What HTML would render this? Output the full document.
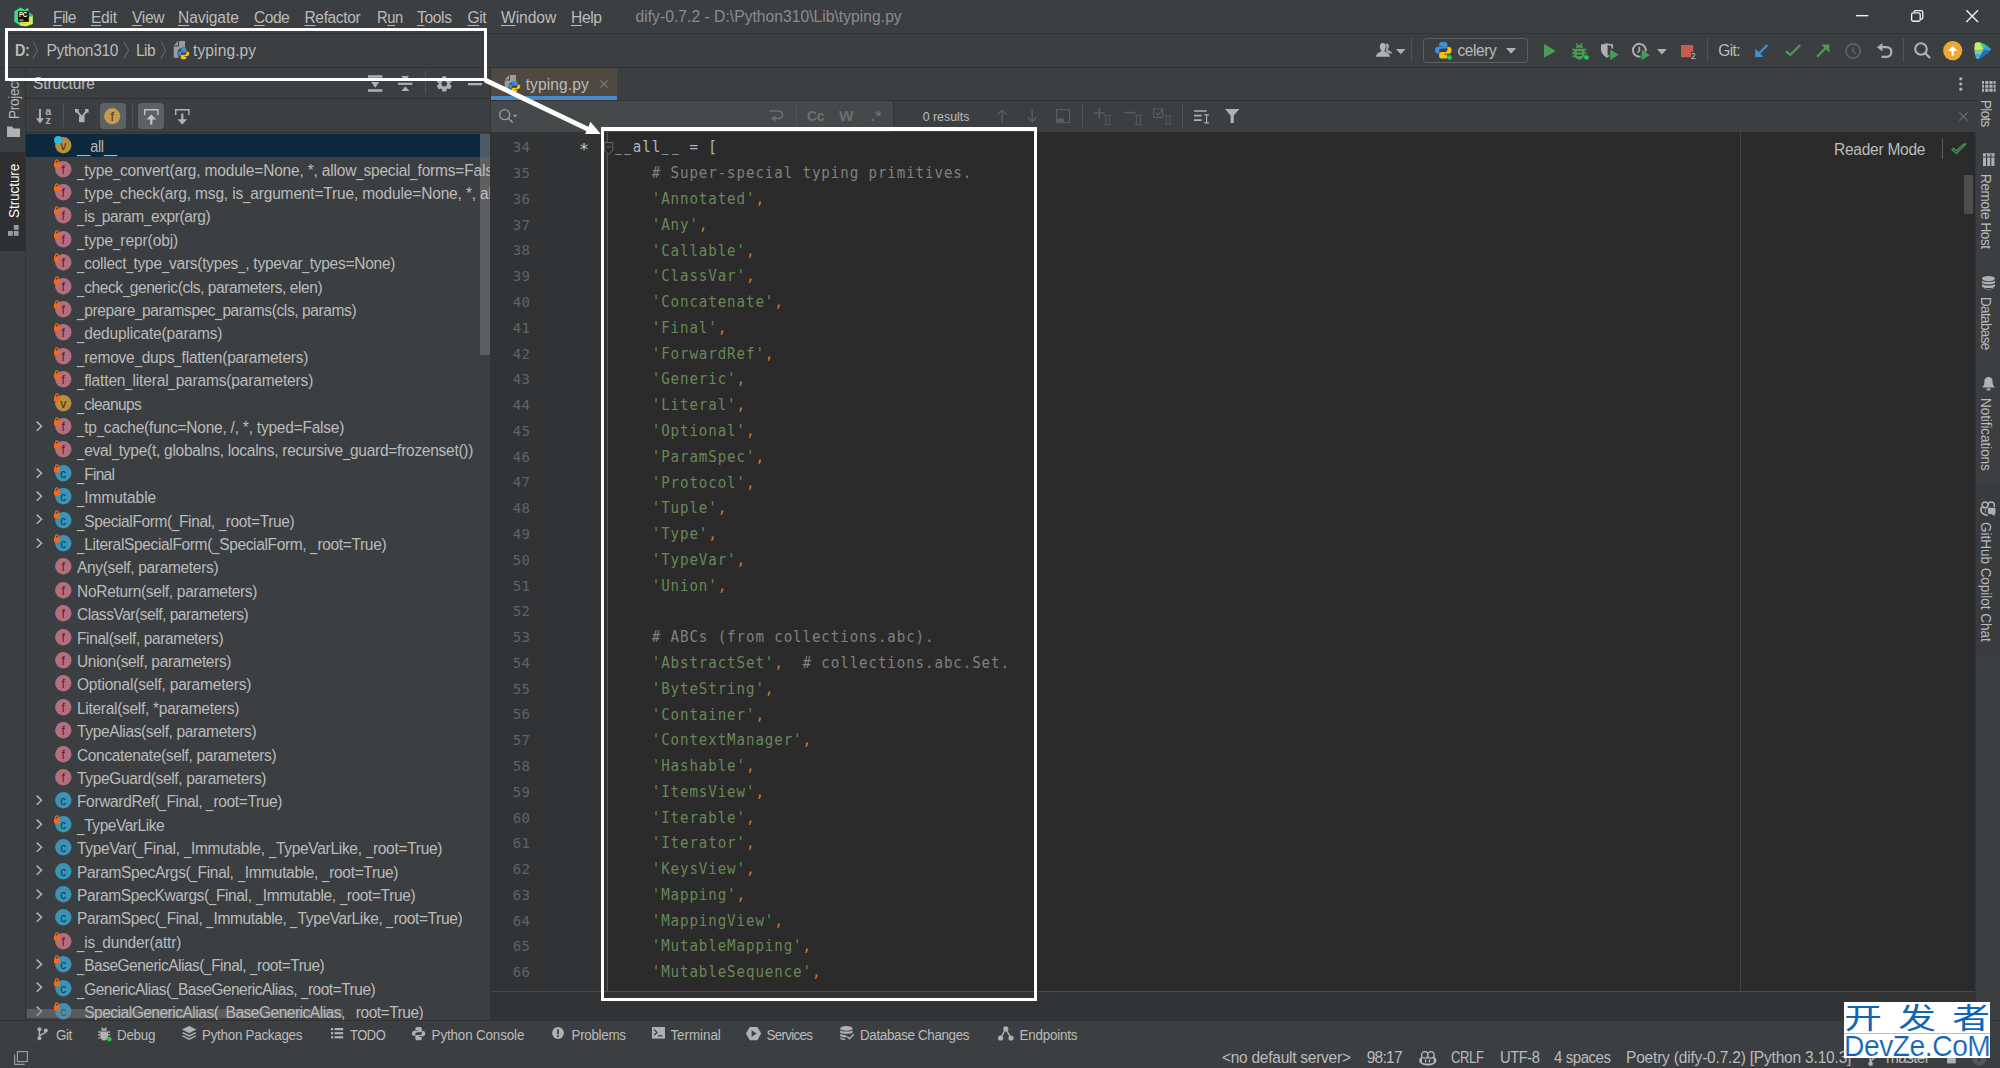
<!DOCTYPE html>
<html lang="en"><head><meta charset="utf-8"><title>typing.py</title>
<style>

html,body{margin:0;padding:0;}
body{width:2000px;height:1068px;overflow:hidden;background:#3c3f41;position:relative;
 font-family:"Liberation Sans","Noto Sans CJK SC",sans-serif;font-size:15.5px;color:#bbbbbb;}
.abs{position:absolute;}
.t{position:absolute;white-space:pre;line-height:20px;height:20px;transform-origin:0 15px;}
.u{display:inline-block;font-style:normal;width:7.2px;letter-spacing:0;transform:translateY(1.1px) scaleX(0.835);transform-origin:0 0;}
.hl{position:absolute;height:1px;background:#323232;}
.vl{position:absolute;width:1px;background:#323232;}
svg{position:absolute;overflow:visible;}
u{text-decoration:underline;text-underline-offset:2px;text-decoration-thickness:1px;}
/* tree */
#tree{position:absolute;left:26px;top:134px;width:464px;height:886px;overflow:hidden;}
.row{position:absolute;left:0;width:464px;height:23.4px;}
.row .t{left:51px;top:2px;}
.row.sel{background:#0d293e;}
/* editor */
#ed{position:absolute;left:490px;top:132px;width:1485px;height:860px;background:#2b2b2b;overflow:hidden;}
#gut{position:absolute;left:0;top:0;width:117px;height:860px;background:#313335;}
.ln{position:absolute;left:0;width:40.35px;text-align:right;color:#606366;font-family:"DejaVu Sans Mono","Liberation Mono",monospace;font-size:14px;letter-spacing:0.35px;line-height:20px;height:20px;}
.cl{position:absolute;left:124.1px;white-space:pre;font-family:"DejaVu Sans Mono","Liberation Mono",monospace;font-size:15.4px;letter-spacing:0.979px;transform:scaleX(0.92);transform-origin:0 0;line-height:20px;height:20px;color:#a9b7c6;}
.cu{display:inline-block;font-style:normal;transform:translateY(-1.3px) scaleX(.8);}
.s{color:#6a8759}.c{color:#808080}.k{color:#cc7832}
.vt{position:absolute;white-space:pre;line-height:16px;height:16px;font-size:13.5px;transform-origin:0 0;}

</style></head>
<body>
<div class="abs" id="menubar" style="left:0;top:0;width:2000px;height:33px;background:#3c3f41"></div>
<svg style="left:14px;top:7px" width="19.2" height="19.4" viewBox="0 0 19.2 19.4"><path d="M0.5 4 L6.5 0.4 L11 3 L14 0.6 L15 6 L19 8 L18.6 16.5 L12 19.2 L6 18.6 L0.2 14.5 Z" fill="#3ddc84"/><path d="M14.6 4.6 L19 8.2 L17.4 11 L14.6 10 Z" fill="#21a8e6"/><path d="M14.8 10 L18.6 9.2 L18.8 17 L12 19.3 L6.2 18.6 L6.6 15 Z" fill="#d8f24e"/><path d="M6 15.5 L15 15.5 L15.4 8 L16.4 15 L10 17 Z" fill="#f5a33a" opacity=".7"/><rect x="4" y="4.2" width="10.8" height="10.6" fill="#0a0c06"/><rect x="5.2" y="12.6" width="4.2" height="1" fill="#e8e8e8"/><text x="4.9" y="10" font-family="Liberation Sans,sans-serif" font-weight="bold" font-size="6.3" fill="#fff" letter-spacing="-0.3">PC</text></svg>
<span class="t" style="left:53px;top:8.4px;letter-spacing:-0.609px;font-size:15.6px;"><u>F</u>ile</span>
<span class="t" style="left:91px;top:8.4px;letter-spacing:-0.297px;font-size:15.6px;"><u>E</u>dit</span>
<span class="t" style="left:132px;top:8.4px;letter-spacing:-0.336px;font-size:15.6px;"><u>V</u>iew</span>
<span class="t" style="left:178px;top:8.4px;letter-spacing:-0.106px;font-size:15.6px;"><u>N</u>avigate</span>
<span class="t" style="left:254px;top:8.4px;letter-spacing:-0.527px;font-size:15.6px;"><u>C</u>ode</span>
<span class="t" style="left:304.5px;top:8.4px;letter-spacing:-0.405px;font-size:15.6px;"><u>R</u>efactor</span>
<span class="t" style="left:377px;top:8.4px;letter-spacing:-0.450px;transform:scale(0.9457,1);font-size:15.6px;">R<u>u</u>n</span>
<span class="t" style="left:417px;top:8.4px;letter-spacing:-0.346px;font-size:15.6px;"><u>T</u>ools</span>
<span class="t" style="left:467.5px;top:8.4px;letter-spacing:-0.411px;font-size:15.6px;"><u>G</u>it</span>
<span class="t" style="left:501px;top:8.4px;letter-spacing:-0.047px;font-size:15.6px;"><u>W</u>indow</span>
<span class="t" style="left:571px;top:8.4px;letter-spacing:-0.348px;font-size:15.6px;"><u>H</u>elp</span>
<span class="t" style="left:635.5px;top:6.6px;letter-spacing:0.047px;font-size:15.6px;color:#8b8d8e;">dify-0.7.2 - D:\Python310\Lib\typing.py</span>
<svg style="left:1856px;top:10px" width="13" height="13" viewBox="0 0 13 13"><path d="M0 5.7 H12.4" stroke="#f0f0f0" stroke-width="1.35" fill="none"/></svg>
<svg style="left:1911px;top:10px" width="13" height="13" viewBox="0 0 13 13"><rect x="0.6" y="2.8" width="8.6" height="8.4" rx="1.6" fill="none" stroke="#f0f0f0" stroke-width="1.35"/><path d="M3 2.6 V2.2 Q3 0.6 4.6 0.6 H10 Q11.8 0.6 11.8 2.4 V7.6 Q11.8 9.2 10.2 9.2 H9.6" fill="none" stroke="#f0f0f0" stroke-width="1.35"/></svg>
<svg style="left:1966px;top:10px" width="13" height="13" viewBox="0 0 13 13"><path d="M0.3 0.3 L12 12 M12 0.3 L0.3 12" stroke="#f0f0f0" stroke-width="1.4" fill="none"/></svg>
<div class="hl" style="left:0;top:33px;width:2000px;background:#323537"></div>
<span class="t" style="left:14.5px;top:40.7px;letter-spacing:-0.450px;transform:scale(0.9244,1.03);font-weight:bold;">D:</span>
<span class="t" style="left:46.5px;top:40.7px;letter-spacing:-0.269px;transform:scale(1,1.03);">Python310</span>
<span class="t" style="left:136px;top:40.7px;letter-spacing:-0.499px;transform:scale(1,1.03);">Lib</span>
<span class="t" style="left:193px;top:40.7px;letter-spacing:0.128px;transform:scale(1,1.03);">typing.py</span>
<svg style="left:32px;top:41px" width="7" height="18" viewBox="0 0 7 18"><path d="M1 0.5 L5.5 9 L1 17.5" fill="none" stroke="#6e7173" stroke-width="1"/></svg>
<svg style="left:123px;top:41px" width="7" height="18" viewBox="0 0 7 18"><path d="M1 0.5 L5.5 9 L1 17.5" fill="none" stroke="#6e7173" stroke-width="1"/></svg>
<svg style="left:160px;top:41px" width="7" height="18" viewBox="0 0 7 18"><path d="M1 0.5 L5.5 9 L1 17.5" fill="none" stroke="#6e7173" stroke-width="1"/></svg>
<svg style="left:173px;top:41px" width="13" height="17" viewBox="0 0 13 17"><path d="M0.7 16.8 V4.4 L5 0 V4.4 H0.7 Z M6 0 H12 V16.8 H0.7 V5.4 H6 Z" fill="#9a9da0"/><rect x="8.8" y="2.4" width="1.2" height="1.2" fill="#7d95a6"/><rect x="8.8" y="5.2" width="1.2" height="1.2" fill="#7d95a6"/><rect x="2" y="9" width="1.2" height="1.2" fill="#7d95a6"/><rect x="4.4" y="9" width="1.2" height="1.2" fill="#7d95a6"/></svg>
<svg style="left:177px;top:47.2px" width="12.6" height="12.6" viewBox="0 0 12 12"><circle cx="6" cy="6" r="5.6" fill="#3c3f41"/></svg>
<svg style="left:177.6px;top:47.8px" width="11.2" height="11.2" viewBox="0 0 12 12"><path d="M5.4 0 C3 0 3.1 1 3.1 1.6 V3 H5.6 V3.5 H2 C0.6 3.5 0 4.6 0 6 C0 7.4 0.7 8.3 1.9 8.3 H3 V6.6 C3 5.4 3.9 4.7 5 4.7 H7.6 C8.5 4.7 9 4 9 3.2 V1.6 C9 0.6 8 0 7 0 Z" fill="#3f8fd6"/><path d="M6.6 12 C9 12 8.9 11 8.9 10.4 V9 H6.4 V8.5 H10 C11.4 8.5 12 7.4 12 6 C12 4.6 11.3 3.7 10.1 3.7 H9 V5.4 C9 6.6 8.1 7.3 7 7.3 H4.4 C3.5 7.3 3 8 3 8.8 V10.4 C3 11.4 4 12 5 12 Z" fill="#f5c211"/></svg>
<svg style="left:1376px;top:43.4px" width="16.6" height="13.8" viewBox="0 0 16.6 13.8"><path d="M9.5 1.2 C10 0.2 12.6 0.2 13 2.4 C13.2 4 12.6 5.4 12 6 V7 C13.4 7.8 16 8.6 16.4 10.4 H12.5 C11.5 9.2 10 8.6 9.6 8 C10.6 6.4 10.8 3 9.5 1.2 Z" fill="#9fa1a3"/><path d="M6.8 0 C9.4 0 10 2 9.8 4 C9.7 5.4 9 6.6 8.6 7.2 V8.4 C10.4 9.2 13.4 10 14 13.8 H0 C0.4 10 3.4 9.2 5.2 8.4 V7.2 C4.6 6.6 4 5.4 3.9 4 C3.7 2 4.4 0 6.8 0 Z" fill="#afb1b3"/></svg>
<svg style="left:1396px;top:49px" width="9.6" height="5.2" viewBox="0 0 9.6 5.2"><path d="M0 0 H9.6 L4.8 5.2 Z" fill="#afb1b3"/></svg>
<div class="vl" style="left:1411px;top:38px;height:24px;background:#515456"></div>
<div class="abs" style="left:1423px;top:37.5px;width:103px;height:23.6px;border:1px solid #5e6162;border-radius:3.5px;box-sizing:content-box"></div>
<svg style="left:1434.8px;top:42px" width="16.6" height="16.6" viewBox="0 0 12 12"><path d="M5.4 0 C3 0 3.1 1 3.1 1.6 V3 H5.6 V3.5 H2 C0.6 3.5 0 4.6 0 6 C0 7.4 0.7 8.3 1.9 8.3 H3 V6.6 C3 5.4 3.9 4.7 5 4.7 H7.6 C8.5 4.7 9 4 9 3.2 V1.6 C9 0.6 8 0 7 0 Z" fill="#3f8fd6"/><path d="M6.6 12 C9 12 8.9 11 8.9 10.4 V9 H6.4 V8.5 H10 C11.4 8.5 12 7.4 12 6 C12 4.6 11.3 3.7 10.1 3.7 H9 V5.4 C9 6.6 8.1 7.3 7 7.3 H4.4 C3.5 7.3 3 8 3 8.8 V10.4 C3 11.4 4 12 5 12 Z" fill="#f5c211"/></svg>
<svg style="left:1447.4px;top:54.7px" width="5" height="5" viewBox="0 0 5 5"><circle cx="2.5" cy="2.5" r="2.4" fill="#1fd23c"/></svg>
<svg style="left:1505.6px;top:48.2px" width="10.2" height="5.8" viewBox="0 0 10.2 5.8"><path d="M0 0 H10.2 L5.1 5.8 Z" fill="#afb1b3"/></svg>
<svg style="left:1543.5px;top:43.8px" width="12" height="14" viewBox="0 0 12 14"><path d="M0 0 L11.8 6.9 L0 13.8 Z" fill="#499c54"/></svg>
<svg style="left:1571.5px;top:42.5px" width="15" height="17" viewBox="0 0 15 17"><path d="M4.4 0.4 L6.2 2.8 M10.2 0.4 L8.4 2.8" stroke="#499c54" stroke-width="1.5" fill="none"/><path d="M0.2 6.6 H2.4 M0 10 H2.4 M0.4 13.4 H2.6 M14.4 6.6 H12.2 M14.6 10 H12.2 M14.2 13.4 H12" stroke="#499c54" stroke-width="1.6" fill="none"/><path d="M7.3 2 C9.8 2 10.8 3.4 11 4.8 H3.6 C3.8 3.4 4.8 2 7.3 2 Z M2 5.8 H12.6 V10.6 C12.6 14.4 10 16.6 7.3 16.6 C4.6 16.6 2 14.4 2 10.6 Z" fill="#499c54"/><rect x="4.6" y="8.2" width="5.4" height="1.4" fill="#3c3f41"/><rect x="4.6" y="11.6" width="5.4" height="1.4" fill="#3c3f41"/></svg>
<svg style="left:1583.6px;top:54.8px" width="5" height="5" viewBox="0 0 5 5"><circle cx="2.5" cy="2.5" r="2.3" fill="#1fd23c"/></svg>
<svg style="left:1601px;top:43px" width="18" height="17.2" viewBox="0 0 18 17.2"><path d="M0 1.4 C2 1.4 4.6 0.9 6 0 V14.6 C3 13 0 10.4 0 5.8 Z" fill="#afb1b3"/><path d="M6 0.9 C7.4 1.6 9.6 2 11.2 2.1 V5.4" fill="none" stroke="#afb1b3" stroke-width="1.7"/><path d="M6 1 V14 C7 13.6 7.6 13.2 8.4 12.6" fill="none" stroke="#afb1b3" stroke-width="1.2"/><path d="M9.2 6.6 L17.8 11.8 L9.2 17 Z" fill="#499c54"/></svg>
<svg style="left:1631.5px;top:43px" width="18" height="17.2" viewBox="0 0 18 17.2"><path d="M8.6 13.5 A6.4 6.4 0 1 1 13.6 8.6" fill="none" stroke="#afb1b3" stroke-width="1.9"/><path d="M7.4 3.8 V7.4 L5.6 9.8" fill="none" stroke="#afb1b3" stroke-width="1.6"/><path d="M9.6 6.8 L17.8 12 L9.6 17.2 Z" fill="#499c54"/></svg>
<svg style="left:1656.8px;top:48.6px" width="9.8" height="5.6" viewBox="0 0 9.8 5.6"><path d="M0 0 H9.8 L4.9 5.6 Z" fill="#afb1b3"/></svg>
<svg style="left:1681.4px;top:44.6px" width="12.4" height="12.4" viewBox="0 0 12.4 12.4"><rect x="0" y="0" width="12.2" height="12.2" fill="#c85a4e"/></svg>
<span class="t" style="left:1690.6px;top:49px;font-size:8.5px;color:#c5c8ca;background:#3c3f41;line-height:8px;height:8px;top:52px;padding:0 0.3px">2</span>
<div class="vl" style="left:1707px;top:38px;height:24px;background:#515456"></div>
<svg style="left:1755.4px;top:44px" width="13.6" height="13.2" viewBox="0 0 13.6 13.2"><path d="M12.4 1 L3 10.6" stroke="#3e93d6" stroke-width="2.2" fill="none"/><path d="M0.2 13 V4.6 L8.4 13 Z" fill="#3e93d6"/></svg>
<svg style="left:1785px;top:44px" width="16.2" height="12.8" viewBox="0 0 16.2 12.8"><path d="M1 7.2 L5.2 11 L15.2 1" stroke="#499c54" stroke-width="2.3" fill="none"/></svg>
<svg style="left:1815.6px;top:44.2px" width="13.8" height="13.6" viewBox="0 0 13.8 13.6"><path d="M1 12.8 L10.4 3.4" stroke="#499c54" stroke-width="2.2" fill="none"/><path d="M13.4 0.4 V8.8 L5.2 0.4 Z" fill="#499c54"/></svg>
<svg style="left:1845px;top:43px" width="16.4" height="16.4" viewBox="0 0 16.4 16.4"><circle cx="8.1" cy="8.1" r="7.1" fill="none" stroke="#5b5e60" stroke-width="2"/><path d="M8 4.2 V8.6 L10.8 10.6" fill="none" stroke="#5b5e60" stroke-width="1.7"/></svg>
<svg style="left:1876.6px;top:43px" width="15.4" height="15" viewBox="0 0 15.4 15"><path d="M5.4 0 V8.4 L0 4.2 Z" fill="#afb1b3"/><path d="M5 4.2 H9.6 C12.6 4.2 14.4 6.4 14.4 9 C14.4 11.8 12.4 13.8 9.6 13.8 H4.6" fill="none" stroke="#afb1b3" stroke-width="2.2"/></svg>
<div class="vl" style="left:1903px;top:38px;height:24px;background:#515456"></div>
<svg style="left:1913.6px;top:42.4px" width="17" height="17" viewBox="0 0 17 17"><circle cx="7" cy="7" r="5.8" fill="none" stroke="#afb1b3" stroke-width="2.1"/><path d="M11 11 L16 16" stroke="#afb1b3" stroke-width="2.4"/></svg>
<svg style="left:1942.8px;top:41px" width="19.2" height="19.2" viewBox="0 0 19.2 19.2"><circle cx="9.7" cy="9.6" r="9.6" fill="#f0a732"/><path d="M9.7 4.8 L14.3 9.9 H10.8 V14.8 H8.6 V9.9 H5.1 Z" fill="#fff"/></svg>
<svg style="left:1974.4px;top:42px" width="17.4" height="17.4" viewBox="0 0 17.4 17.4"><defs><clipPath id="tbx"><path d="M1 1.2 C2.4 -0.2 5.4 0 8 1 C11.6 2.4 15 4.8 17 7.4 C15 10.6 10 14.6 5.2 16.8 C3.8 17.4 2.6 17.2 2.2 16 C0.2 11 0 5.2 1 1.2 Z"/></clipPath></defs><g clip-path="url(#tbx)"><rect x="0" y="0" width="17.4" height="17.4" fill="#1b74c9"/><path d="M0 0 H6.4 L9.6 7.4 L0 8.6 Z" fill="#c6ee5c"/><path d="M6 -1 H10 L13.4 2.6 L9.6 7.4 Z" fill="#37d27c"/><path d="M10 -1 L18 4 V8.6 L9.6 7.4 L13.4 2.6 Z" fill="#2fa8dc"/><path d="M0 8.6 L9.6 7.4 L6.4 13 L0 11.8 Z" fill="#8fc79a"/><path d="M0 11.8 L6.4 13 L4.4 18 H0 Z" fill="#38b6d9"/></g></svg>
<span class="t" style="left:1457.5px;top:41.2px;letter-spacing:-0.443px;transform:scale(1,1.03);font-size:15.5px;">celery</span>
<span class="t" style="left:1718.3px;top:41.3px;letter-spacing:-0.656px;transform:scale(1,1.03);font-size:15.5px;">Git:</span>
<div class="hl" style="left:0;top:67px;width:2000px;background:#323232"></div>
<div class="abs" style="left:0;top:68px;width:25px;height:952px;background:#3c3f41"></div>
<div class="vl" style="left:25px;top:68px;height:952px;background:#323232"></div>
<div class="abs" style="left:0;top:151.5px;width:24.5px;height:99.5px;background:#2d2f30"></div>
<span class="vt" style="left:6.6px;top:118.5px;transform:rotate(-90deg) scale(1,1.03);letter-spacing:-0.260px;">Project</span>
<svg style="left:7px;top:126px" width="13" height="11" viewBox="0 0 13 11"><path d="M0 0.6 H5 L6.6 2.6 H13 V11 H0 Z" fill="#afb1b3"/></svg>
<span class="vt" style="left:6.6px;top:217.5px;transform:rotate(-90deg) scale(1,1.03);letter-spacing:-0.064px;color:#ffffff;">Structure</span>
<svg style="left:8px;top:225px" width="11" height="11" viewBox="0 0 11 11"><rect x="5.8" y="0" width="4.8" height="4.8" fill="#9a9da0"/><rect x="0" y="6" width="4.8" height="4.8" fill="#9a9da0"/><rect x="5.8" y="6" width="4.8" height="4.8" fill="#9a9da0"/></svg>
<div class="abs" style="left:1974.6px;top:68px;width:25.4px;height:952px;background:#3c3f41"></div>
<div class="abs" style="left:1974.6px;top:132px;width:1.4px;height:888px;background:#343638"></div>
<div class="abs" style="left:1976px;top:484px;width:24px;height:172px;background:#393c3e"></div>
<svg style="left:1981.5px;top:80.5px" width="13.6" height="10.8" viewBox="0 0 13.6 10.8"><rect x="0" y="0" width="2" height="10.8" fill="#afb1b3"/><rect x="3.2" y="0" width="3.2" height="10.8" fill="#afb1b3"/><rect x="7.4" y="0" width="3.2" height="10.8" fill="#afb1b3"/><rect x="11.6" y="0" width="2" height="10.8" fill="#afb1b3"/><path d="M0 3.4 H13.6 M0 7.2 H13.6" stroke="#3c3f41" stroke-width="0.9"/></svg>
<span class="vt" style="left:1993.4px;top:100px;transform:rotate(90deg) scale(1,1.03);letter-spacing:-0.663px;">Plots</span>
<svg style="left:1982.5px;top:153px" width="11.6" height="13" viewBox="0 0 11.6 13"><rect x="0" y="0" width="3" height="13" fill="#afb1b3"/><rect x="4.2" y="0" width="3" height="13" fill="#afb1b3"/><rect x="8.4" y="0" width="3" height="13" fill="#afb1b3"/><path d="M0 4 H11.6" stroke="#3c3f41" stroke-width="1"/><path d="M0 0.6 H11.6" stroke="#8e9092" stroke-width="1.2"/></svg>
<span class="vt" style="left:1993.4px;top:174px;transform:rotate(90deg) scale(1,1.03);letter-spacing:-0.371px;">Remote Host</span>
<svg style="left:1981.5px;top:276px" width="13" height="13.6" viewBox="0 0 13 13.6"><ellipse cx="6.5" cy="2.6" rx="6.4" ry="2.6" fill="#afb1b3"/><path d="M0.1 4.4 C1 6.4 12 6.4 12.9 4.4 V6.8 C12 8.8 1 8.8 0.1 6.8 Z M0.1 8 C1 10 12 10 12.9 8 V10.4 C12 12.4 1 12.4 0.1 10.4 Z" fill="#afb1b3"/><path d="M0.1 11.4 C1 13.4 12 13.4 12.9 11.4 V11.6 C12 14.2 1 14.2 0.1 11.6 Z" fill="#afb1b3"/></svg>
<span class="vt" style="left:1993.4px;top:296.5px;transform:rotate(90deg) scale(1,1.03);letter-spacing:-0.637px;">Database</span>
<svg style="left:1981.5px;top:376.5px" width="13" height="13.6" viewBox="0 0 13 13.6"><path d="M6.5 0 C9.6 0 10.6 2.4 10.6 5 C10.6 8 11.6 9.2 13 10.4 H0 C1.4 9.2 2.4 8 2.4 5 C2.4 2.4 3.4 0 6.5 0 Z" fill="#afb1b3"/><rect x="4.6" y="11.4" width="3.8" height="2" fill="#afb1b3"/></svg>
<span class="vt" style="left:1993.4px;top:397.5px;transform:rotate(90deg) scale(1,1.03);letter-spacing:-0.064px;">Notifications</span>
<svg style="left:1979.8px;top:501.2px" width="15.8" height="15.2" viewBox="0 0 15.8 15.2"><circle cx="5.1" cy="3.9" r="2.9" fill="none" stroke="#afb1b3" stroke-width="1.5"/><path d="M8.3 4 A3 3 0 0 1 14.3 4 V6" fill="none" stroke="#afb1b3" stroke-width="1.5"/><path d="M2.6 5.6 C0.4 7.2 0.4 10.8 2.6 12.4 C4 13.6 6 14.2 7.6 14.4" fill="none" stroke="#afb1b3" stroke-width="1.8"/><path d="M5.4 7.2 V11.4" stroke="#8a8c8e" stroke-width="1.2"/><rect x="7.9" y="6.8" width="7.6" height="6.2" rx="1" fill="#afb1b3"/><path d="M11.4 12.8 L14.6 15.2 V12.8 Z" fill="#afb1b3"/></svg>
<span class="vt" style="left:1993.4px;top:521.5px;transform:rotate(90deg) scale(1,1.03);letter-spacing:-0.019px;">GitHub Copilot Chat</span>
<span class="t" style="left:33px;top:73.8px;letter-spacing:-0.132px;transform:scale(1,1.03);">Structure</span>
<svg style="left:367.8px;top:75px" width="14.4" height="17" viewBox="0 0 14.4 17"><path d="M0 1.4 H14.4 M0 4.8 H14.4 M0 15.5 H14.4" stroke="#afb1b3" stroke-width="2.5" fill="none"/><path d="M3.2 7 H11.2 L7.2 12.8 Z" fill="#afb1b3"/></svg>
<svg style="left:398.2px;top:75px" width="14.4" height="17" viewBox="0 0 14.4 17"><path d="M0 8.8 H14.4" stroke="#afb1b3" stroke-width="2.1" fill="none"/><path d="M3.4 1 H11 L7.2 6 Z" fill="#afb1b3"/><path d="M3.4 15.9 H11.4 L7.4 11.4 Z" fill="#afb1b3"/></svg>
<div class="vl" style="left:425px;top:71px;height:23px;background:#515456"></div>
<svg style="left:437.2px;top:75.8px" width="14.6" height="15.6" viewBox="0 0 14.6 15.6"><g transform="translate(7.3 7.8)"><path d="M-1.9 -7.6 H1.9 L2.4 -4.6 H-2.4 Z" fill="#afb1b3" transform="rotate(0)"/><path d="M-1.9 -7.6 H1.9 L2.4 -4.6 H-2.4 Z" fill="#afb1b3" transform="rotate(60)"/><path d="M-1.9 -7.6 H1.9 L2.4 -4.6 H-2.4 Z" fill="#afb1b3" transform="rotate(120)"/><path d="M-1.9 -7.6 H1.9 L2.4 -4.6 H-2.4 Z" fill="#afb1b3" transform="rotate(180)"/><path d="M-1.9 -7.6 H1.9 L2.4 -4.6 H-2.4 Z" fill="#afb1b3" transform="rotate(240)"/><path d="M-1.9 -7.6 H1.9 L2.4 -4.6 H-2.4 Z" fill="#afb1b3" transform="rotate(300)"/><circle r="4.3" fill="none" stroke="#afb1b3" stroke-width="3"/></g></svg>
<svg style="left:467.9px;top:82.5px" width="14" height="2.4" viewBox="0 0 14 2.4"><rect width="14" height="2.3" y="0" fill="#afb1b3"/></svg>
<div class="hl" style="left:26px;top:97.5px;width:464px;background:#323232"></div>
<svg style="left:35.8px;top:109px" width="16" height="15" viewBox="0 0 16 15"><path d="M4 0 V11" stroke="#afb1b3" stroke-width="1.9" fill="none"/><path d="M0 9.2 H8 L4 14.6 Z" fill="#afb1b3"/><text x="9.2" y="6.4" font-family="Liberation Sans,sans-serif" font-weight="bold" font-size="10.6" fill="#afb1b3">a</text><text x="9.6" y="14.6" font-family="Liberation Sans,sans-serif" font-weight="bold" font-size="10.6" fill="#afb1b3">z</text></svg>
<div class="vl" style="left:63px;top:104px;height:23px;background:#515456"></div>
<svg style="left:74.8px;top:109.2px" width="13.6" height="13.2" viewBox="0 0 13.6 13.2"><rect x="0" y="0" width="3.6" height="3.6" fill="#afb1b3"/><rect x="10" y="0" width="3.6" height="3.6" fill="#afb1b3"/><path d="M1.8 1.8 L6.8 8 L11.8 1.8" stroke="#afb1b3" stroke-width="1.9" fill="none"/><rect x="4" y="7.2" width="5.6" height="6" fill="#afb1b3"/></svg>
<div class="abs" style="left:99.5px;top:103px;width:26.2px;height:26px;border-radius:4px;background:#5c6164"></div>
<svg style="left:104.4px;top:108px" width="16.4" height="16.4" viewBox="0 0 16.4 16.4"><circle cx="8.2" cy="8.2" r="8.1" fill="#c29a52"/><text x="8.2" y="12.8" text-anchor="middle" font-family="Liberation Sans,sans-serif" font-size="12.5" fill="#5a3320">f</text></svg>
<div class="vl" style="left:132px;top:104px;height:23px;background:#515456"></div>
<div class="abs" style="left:138px;top:103px;width:26px;height:26px;border-radius:4px;background:#5c6164"></div>
<svg style="left:144.4px;top:109px" width="14.6" height="15.6" viewBox="0 0 14.6 15.6"><path d="M0.7 6 V0.7 H13.9 V6" stroke="#c0c2c4" stroke-width="1.4" fill="none"/><path d="M7.3 5.4 L12.2 10.4 H8.4 V15.4 H6.2 V10.4 H2.4 Z" fill="#c0c2c4"/></svg>
<svg style="left:175px;top:109px" width="14.6" height="15.6" viewBox="0 0 14.6 15.6"><path d="M0.7 6 V0.7 H13.9 V6" stroke="#afb1b3" stroke-width="1.4" fill="none"/><path d="M7.3 15.4 L12.2 10.2 H8.4 V4.6 H6.2 V10.2 H2.4 Z" fill="#afb1b3"/></svg>
<div class="hl" style="left:26px;top:132px;width:464px;background:#323232"></div>
<div id="tree">
<div class="abs" style="left:0;top:0;width:454px;height:23px;background:#0d293e"></div>
<div class="abs" style="left:454px;top:0;width:9.5px;height:221px;background:#5d5f61"></div>
<div class="abs" style="left:454px;top:0;width:9.5px;height:23px;background:#4a5a68"></div>
<div class="abs" style="left:47px;top:875.4px;width:270.4px;height:8.6px;background:#595b5d"></div>
<div class="row" style="top:0px"><svg style="left:29px;top:3.3px" width="16.6" height="16.6" viewBox="0 0 16.4 16.4"><circle cx="8.2" cy="8.2" r="8.1" fill="#b88e3c"/><text x="8.2" y="12.4" text-anchor="middle" font-family="Liberation Sans,sans-serif" font-size="12" fill="#3e2f1a">v</text></svg>
<svg style="left:27.8px;top:1.6px" width="8.4" height="8.4" viewBox="0 0 8.4 8.4"><circle cx="4.2" cy="4.2" r="4.1" fill="#2fb8d8"/></svg>
<span class="t" style="left:51px;top:3.2px;letter-spacing:-0.450px;transform:scale(0.9273,1.03);"><i class="u">_</i><i class="u">_</i>all<i class="u">_</i><i class="u">_</i></span>
</div>
<div class="row" style="top:23.4px"><svg style="left:29px;top:3.3px" width="16.6" height="16.6" viewBox="0 0 16.4 16.4"><circle cx="8.2" cy="8.2" r="8.1" fill="#b46e80"/><text x="8.2" y="12.6" text-anchor="middle" font-family="Liberation Sans,sans-serif" font-size="12" fill="#47272f">f</text></svg>
<svg style="left:28px;top:2.1px" width="5.8" height="8.4" viewBox="0 0 5.8 8.4"><path d="M1.4 3.6 V2.5 C1.4 0.3 4.4 0.3 4.4 2.5 V3.6" fill="none" stroke="#f26a1f" stroke-width="1.2"/><rect x="0" y="3.4" width="5.8" height="5" fill="#f26a1f"/></svg>
<span class="t" style="left:51px;top:3.2px;letter-spacing:-0.185px;transform:scale(1,1.03);"><i class="u">_</i>type<i class="u">_</i>convert(arg, module=None, *, allow<i class="u">_</i>special<i class="u">_</i>forms=False)</span>
</div>
<div class="row" style="top:46.8px"><svg style="left:29px;top:3.3px" width="16.6" height="16.6" viewBox="0 0 16.4 16.4"><circle cx="8.2" cy="8.2" r="8.1" fill="#b46e80"/><text x="8.2" y="12.6" text-anchor="middle" font-family="Liberation Sans,sans-serif" font-size="12" fill="#47272f">f</text></svg>
<svg style="left:28px;top:2.1px" width="5.8" height="8.4" viewBox="0 0 5.8 8.4"><path d="M1.4 3.6 V2.5 C1.4 0.3 4.4 0.3 4.4 2.5 V3.6" fill="none" stroke="#f26a1f" stroke-width="1.2"/><rect x="0" y="3.4" width="5.8" height="5" fill="#f26a1f"/></svg>
<span class="t" style="left:51px;top:3.2px;letter-spacing:-0.155px;transform:scale(1,1.03);"><i class="u">_</i>type<i class="u">_</i>check(arg, msg, is<i class="u">_</i>argument=True, module=None, *, allow<i class="u">_</i>special<i class="u">_</i>forms=False)</span>
</div>
<div class="row" style="top:70.2px"><svg style="left:29px;top:3.3px" width="16.6" height="16.6" viewBox="0 0 16.4 16.4"><circle cx="8.2" cy="8.2" r="8.1" fill="#b46e80"/><text x="8.2" y="12.6" text-anchor="middle" font-family="Liberation Sans,sans-serif" font-size="12" fill="#47272f">f</text></svg>
<svg style="left:28px;top:2.1px" width="5.8" height="8.4" viewBox="0 0 5.8 8.4"><path d="M1.4 3.6 V2.5 C1.4 0.3 4.4 0.3 4.4 2.5 V3.6" fill="none" stroke="#f26a1f" stroke-width="1.2"/><rect x="0" y="3.4" width="5.8" height="5" fill="#f26a1f"/></svg>
<span class="t" style="left:51px;top:3.2px;letter-spacing:-0.399px;transform:scale(1,1.03);"><i class="u">_</i>is<i class="u">_</i>param<i class="u">_</i>expr(arg)</span>
</div>
<div class="row" style="top:93.6px"><svg style="left:29px;top:3.3px" width="16.6" height="16.6" viewBox="0 0 16.4 16.4"><circle cx="8.2" cy="8.2" r="8.1" fill="#b46e80"/><text x="8.2" y="12.6" text-anchor="middle" font-family="Liberation Sans,sans-serif" font-size="12" fill="#47272f">f</text></svg>
<svg style="left:28px;top:2.1px" width="5.8" height="8.4" viewBox="0 0 5.8 8.4"><path d="M1.4 3.6 V2.5 C1.4 0.3 4.4 0.3 4.4 2.5 V3.6" fill="none" stroke="#f26a1f" stroke-width="1.2"/><rect x="0" y="3.4" width="5.8" height="5" fill="#f26a1f"/></svg>
<span class="t" style="left:51px;top:3.2px;letter-spacing:-0.082px;transform:scale(1,1.03);"><i class="u">_</i>type<i class="u">_</i>repr(obj)</span>
</div>
<div class="row" style="top:117px"><svg style="left:29px;top:3.3px" width="16.6" height="16.6" viewBox="0 0 16.4 16.4"><circle cx="8.2" cy="8.2" r="8.1" fill="#b46e80"/><text x="8.2" y="12.6" text-anchor="middle" font-family="Liberation Sans,sans-serif" font-size="12" fill="#47272f">f</text></svg>
<svg style="left:28px;top:2.1px" width="5.8" height="8.4" viewBox="0 0 5.8 8.4"><path d="M1.4 3.6 V2.5 C1.4 0.3 4.4 0.3 4.4 2.5 V3.6" fill="none" stroke="#f26a1f" stroke-width="1.2"/><rect x="0" y="3.4" width="5.8" height="5" fill="#f26a1f"/></svg>
<span class="t" style="left:51px;top:3.2px;letter-spacing:-0.250px;transform:scale(1,1.03);"><i class="u">_</i>collect<i class="u">_</i>type<i class="u">_</i>vars(types<i class="u">_</i>, typevar<i class="u">_</i>types=None)</span>
</div>
<div class="row" style="top:140.4px"><svg style="left:29px;top:3.3px" width="16.6" height="16.6" viewBox="0 0 16.4 16.4"><circle cx="8.2" cy="8.2" r="8.1" fill="#b46e80"/><text x="8.2" y="12.6" text-anchor="middle" font-family="Liberation Sans,sans-serif" font-size="12" fill="#47272f">f</text></svg>
<svg style="left:28px;top:2.1px" width="5.8" height="8.4" viewBox="0 0 5.8 8.4"><path d="M1.4 3.6 V2.5 C1.4 0.3 4.4 0.3 4.4 2.5 V3.6" fill="none" stroke="#f26a1f" stroke-width="1.2"/><rect x="0" y="3.4" width="5.8" height="5" fill="#f26a1f"/></svg>
<span class="t" style="left:51px;top:3.2px;letter-spacing:-0.421px;transform:scale(1,1.03);"><i class="u">_</i>check<i class="u">_</i>generic(cls, parameters, elen)</span>
</div>
<div class="row" style="top:163.8px"><svg style="left:29px;top:3.3px" width="16.6" height="16.6" viewBox="0 0 16.4 16.4"><circle cx="8.2" cy="8.2" r="8.1" fill="#b46e80"/><text x="8.2" y="12.6" text-anchor="middle" font-family="Liberation Sans,sans-serif" font-size="12" fill="#47272f">f</text></svg>
<svg style="left:28px;top:2.1px" width="5.8" height="8.4" viewBox="0 0 5.8 8.4"><path d="M1.4 3.6 V2.5 C1.4 0.3 4.4 0.3 4.4 2.5 V3.6" fill="none" stroke="#f26a1f" stroke-width="1.2"/><rect x="0" y="3.4" width="5.8" height="5" fill="#f26a1f"/></svg>
<span class="t" style="left:51px;top:3.2px;letter-spacing:-0.393px;transform:scale(1,1.03);"><i class="u">_</i>prepare<i class="u">_</i>paramspec<i class="u">_</i>params(cls, params)</span>
</div>
<div class="row" style="top:187.2px"><svg style="left:29px;top:3.3px" width="16.6" height="16.6" viewBox="0 0 16.4 16.4"><circle cx="8.2" cy="8.2" r="8.1" fill="#b46e80"/><text x="8.2" y="12.6" text-anchor="middle" font-family="Liberation Sans,sans-serif" font-size="12" fill="#47272f">f</text></svg>
<svg style="left:28px;top:2.1px" width="5.8" height="8.4" viewBox="0 0 5.8 8.4"><path d="M1.4 3.6 V2.5 C1.4 0.3 4.4 0.3 4.4 2.5 V3.6" fill="none" stroke="#f26a1f" stroke-width="1.2"/><rect x="0" y="3.4" width="5.8" height="5" fill="#f26a1f"/></svg>
<span class="t" style="left:51px;top:3.2px;letter-spacing:-0.173px;transform:scale(1,1.03);"><i class="u">_</i>deduplicate(params)</span>
</div>
<div class="row" style="top:210.6px"><svg style="left:29px;top:3.3px" width="16.6" height="16.6" viewBox="0 0 16.4 16.4"><circle cx="8.2" cy="8.2" r="8.1" fill="#b46e80"/><text x="8.2" y="12.6" text-anchor="middle" font-family="Liberation Sans,sans-serif" font-size="12" fill="#47272f">f</text></svg>
<svg style="left:28px;top:2.1px" width="5.8" height="8.4" viewBox="0 0 5.8 8.4"><path d="M1.4 3.6 V2.5 C1.4 0.3 4.4 0.3 4.4 2.5 V3.6" fill="none" stroke="#f26a1f" stroke-width="1.2"/><rect x="0" y="3.4" width="5.8" height="5" fill="#f26a1f"/></svg>
<span class="t" style="left:51px;top:3.2px;letter-spacing:-0.228px;transform:scale(1,1.03);"><i class="u">_</i>remove<i class="u">_</i>dups<i class="u">_</i>flatten(parameters)</span>
</div>
<div class="row" style="top:234px"><svg style="left:29px;top:3.3px" width="16.6" height="16.6" viewBox="0 0 16.4 16.4"><circle cx="8.2" cy="8.2" r="8.1" fill="#b46e80"/><text x="8.2" y="12.6" text-anchor="middle" font-family="Liberation Sans,sans-serif" font-size="12" fill="#47272f">f</text></svg>
<svg style="left:28px;top:2.1px" width="5.8" height="8.4" viewBox="0 0 5.8 8.4"><path d="M1.4 3.6 V2.5 C1.4 0.3 4.4 0.3 4.4 2.5 V3.6" fill="none" stroke="#f26a1f" stroke-width="1.2"/><rect x="0" y="3.4" width="5.8" height="5" fill="#f26a1f"/></svg>
<span class="t" style="left:51px;top:3.2px;letter-spacing:-0.158px;transform:scale(1,1.03);"><i class="u">_</i>flatten<i class="u">_</i>literal<i class="u">_</i>params(parameters)</span>
</div>
<div class="row" style="top:257.4px"><svg style="left:29px;top:3.3px" width="16.6" height="16.6" viewBox="0 0 16.4 16.4"><circle cx="8.2" cy="8.2" r="8.1" fill="#b88e3c"/><text x="8.2" y="12.4" text-anchor="middle" font-family="Liberation Sans,sans-serif" font-size="12" fill="#3e2f1a">v</text></svg>
<svg style="left:28px;top:2.1px" width="5.8" height="8.4" viewBox="0 0 5.8 8.4"><path d="M1.4 3.6 V2.5 C1.4 0.3 4.4 0.3 4.4 2.5 V3.6" fill="none" stroke="#f26a1f" stroke-width="1.2"/><rect x="0" y="3.4" width="5.8" height="5" fill="#f26a1f"/></svg>
<span class="t" style="left:51px;top:3.2px;letter-spacing:-0.629px;transform:scale(1,1.03);"><i class="u">_</i>cleanups</span>
</div>
<div class="row" style="top:280.8px"><svg style="left:10.2px;top:6px" width="6.4" height="10.4" viewBox="0 0 6.4 10.4"><path d="M0.7 0.6 L5.5 5.2 L0.7 9.8" fill="none" stroke="#b4b6b8" stroke-width="1.5"/></svg>
<svg style="left:29px;top:3.3px" width="16.6" height="16.6" viewBox="0 0 16.4 16.4"><circle cx="8.2" cy="8.2" r="8.1" fill="#b46e80"/><text x="8.2" y="12.6" text-anchor="middle" font-family="Liberation Sans,sans-serif" font-size="12" fill="#47272f">f</text></svg>
<svg style="left:28px;top:2.1px" width="5.8" height="8.4" viewBox="0 0 5.8 8.4"><path d="M1.4 3.6 V2.5 C1.4 0.3 4.4 0.3 4.4 2.5 V3.6" fill="none" stroke="#f26a1f" stroke-width="1.2"/><rect x="0" y="3.4" width="5.8" height="5" fill="#f26a1f"/></svg>
<span class="t" style="left:51px;top:3.2px;letter-spacing:-0.223px;transform:scale(1,1.03);"><i class="u">_</i>tp<i class="u">_</i>cache(func=None, /, *, typed=False)</span>
</div>
<div class="row" style="top:304.2px"><svg style="left:29px;top:3.3px" width="16.6" height="16.6" viewBox="0 0 16.4 16.4"><circle cx="8.2" cy="8.2" r="8.1" fill="#b46e80"/><text x="8.2" y="12.6" text-anchor="middle" font-family="Liberation Sans,sans-serif" font-size="12" fill="#47272f">f</text></svg>
<svg style="left:28px;top:2.1px" width="5.8" height="8.4" viewBox="0 0 5.8 8.4"><path d="M1.4 3.6 V2.5 C1.4 0.3 4.4 0.3 4.4 2.5 V3.6" fill="none" stroke="#f26a1f" stroke-width="1.2"/><rect x="0" y="3.4" width="5.8" height="5" fill="#f26a1f"/></svg>
<span class="t" style="left:51px;top:3.2px;letter-spacing:-0.263px;transform:scale(1,1.03);"><i class="u">_</i>eval<i class="u">_</i>type(t, globalns, localns, recursive<i class="u">_</i>guard=frozenset())</span>
</div>
<div class="row" style="top:327.6px"><svg style="left:10.2px;top:6px" width="6.4" height="10.4" viewBox="0 0 6.4 10.4"><path d="M0.7 0.6 L5.5 5.2 L0.7 9.8" fill="none" stroke="#b4b6b8" stroke-width="1.5"/></svg>
<svg style="left:29px;top:3.3px" width="16.6" height="16.6" viewBox="0 0 16.4 16.4"><circle cx="8.2" cy="8.2" r="8.1" fill="#3a93b8"/><text x="8.2" y="12.4" text-anchor="middle" font-family="Liberation Sans,sans-serif" font-size="12" fill="#173a4d">c</text></svg>
<svg style="left:28px;top:2.1px" width="5.8" height="8.4" viewBox="0 0 5.8 8.4"><path d="M1.4 3.6 V2.5 C1.4 0.3 4.4 0.3 4.4 2.5 V3.6" fill="none" stroke="#f26a1f" stroke-width="1.2"/><rect x="0" y="3.4" width="5.8" height="5" fill="#f26a1f"/></svg>
<span class="t" style="left:51px;top:3.2px;letter-spacing:-0.718px;transform:scale(1,1.03);"><i class="u">_</i>Final</span>
</div>
<div class="row" style="top:351px"><svg style="left:10.2px;top:6px" width="6.4" height="10.4" viewBox="0 0 6.4 10.4"><path d="M0.7 0.6 L5.5 5.2 L0.7 9.8" fill="none" stroke="#b4b6b8" stroke-width="1.5"/></svg>
<svg style="left:29px;top:3.3px" width="16.6" height="16.6" viewBox="0 0 16.4 16.4"><circle cx="8.2" cy="8.2" r="8.1" fill="#3a93b8"/><text x="8.2" y="12.4" text-anchor="middle" font-family="Liberation Sans,sans-serif" font-size="12" fill="#173a4d">c</text></svg>
<svg style="left:28px;top:2.1px" width="5.8" height="8.4" viewBox="0 0 5.8 8.4"><path d="M1.4 3.6 V2.5 C1.4 0.3 4.4 0.3 4.4 2.5 V3.6" fill="none" stroke="#f26a1f" stroke-width="1.2"/><rect x="0" y="3.4" width="5.8" height="5" fill="#f26a1f"/></svg>
<span class="t" style="left:51px;top:3.2px;letter-spacing:-0.040px;transform:scale(1,1.03);"><i class="u">_</i>Immutable</span>
</div>
<div class="row" style="top:374.4px"><svg style="left:10.2px;top:6px" width="6.4" height="10.4" viewBox="0 0 6.4 10.4"><path d="M0.7 0.6 L5.5 5.2 L0.7 9.8" fill="none" stroke="#b4b6b8" stroke-width="1.5"/></svg>
<svg style="left:29px;top:3.3px" width="16.6" height="16.6" viewBox="0 0 16.4 16.4"><circle cx="8.2" cy="8.2" r="8.1" fill="#3a93b8"/><text x="8.2" y="12.4" text-anchor="middle" font-family="Liberation Sans,sans-serif" font-size="12" fill="#173a4d">c</text></svg>
<svg style="left:28px;top:2.1px" width="5.8" height="8.4" viewBox="0 0 5.8 8.4"><path d="M1.4 3.6 V2.5 C1.4 0.3 4.4 0.3 4.4 2.5 V3.6" fill="none" stroke="#f26a1f" stroke-width="1.2"/><rect x="0" y="3.4" width="5.8" height="5" fill="#f26a1f"/></svg>
<span class="t" style="left:51px;top:3.2px;letter-spacing:-0.378px;transform:scale(1,1.03);"><i class="u">_</i>SpecialForm(<i class="u">_</i>Final, <i class="u">_</i>root=True)</span>
</div>
<div class="row" style="top:397.8px"><svg style="left:10.2px;top:6px" width="6.4" height="10.4" viewBox="0 0 6.4 10.4"><path d="M0.7 0.6 L5.5 5.2 L0.7 9.8" fill="none" stroke="#b4b6b8" stroke-width="1.5"/></svg>
<svg style="left:29px;top:3.3px" width="16.6" height="16.6" viewBox="0 0 16.4 16.4"><circle cx="8.2" cy="8.2" r="8.1" fill="#3a93b8"/><text x="8.2" y="12.4" text-anchor="middle" font-family="Liberation Sans,sans-serif" font-size="12" fill="#173a4d">c</text></svg>
<svg style="left:28px;top:2.1px" width="5.8" height="8.4" viewBox="0 0 5.8 8.4"><path d="M1.4 3.6 V2.5 C1.4 0.3 4.4 0.3 4.4 2.5 V3.6" fill="none" stroke="#f26a1f" stroke-width="1.2"/><rect x="0" y="3.4" width="5.8" height="5" fill="#f26a1f"/></svg>
<span class="t" style="left:51px;top:3.2px;letter-spacing:-0.347px;transform:scale(1,1.03);"><i class="u">_</i>LiteralSpecialForm(<i class="u">_</i>SpecialForm, <i class="u">_</i>root=True)</span>
</div>
<div class="row" style="top:421.2px"><svg style="left:29px;top:3.3px" width="16.6" height="16.6" viewBox="0 0 16.4 16.4"><circle cx="8.2" cy="8.2" r="8.1" fill="#b46e80"/><text x="8.2" y="12.6" text-anchor="middle" font-family="Liberation Sans,sans-serif" font-size="12" fill="#47272f">f</text></svg>
<span class="t" style="left:51px;top:3.2px;letter-spacing:-0.331px;transform:scale(1,1.03);">Any(self, parameters)</span>
</div>
<div class="row" style="top:444.6px"><svg style="left:29px;top:3.3px" width="16.6" height="16.6" viewBox="0 0 16.4 16.4"><circle cx="8.2" cy="8.2" r="8.1" fill="#b46e80"/><text x="8.2" y="12.6" text-anchor="middle" font-family="Liberation Sans,sans-serif" font-size="12" fill="#47272f">f</text></svg>
<span class="t" style="left:51px;top:3.2px;letter-spacing:-0.292px;transform:scale(1,1.03);">NoReturn(self, parameters)</span>
</div>
<div class="row" style="top:468px"><svg style="left:29px;top:3.3px" width="16.6" height="16.6" viewBox="0 0 16.4 16.4"><circle cx="8.2" cy="8.2" r="8.1" fill="#b46e80"/><text x="8.2" y="12.6" text-anchor="middle" font-family="Liberation Sans,sans-serif" font-size="12" fill="#47272f">f</text></svg>
<span class="t" style="left:51px;top:3.2px;letter-spacing:-0.461px;transform:scale(1,1.03);">ClassVar(self, parameters)</span>
</div>
<div class="row" style="top:491.4px"><svg style="left:29px;top:3.3px" width="16.6" height="16.6" viewBox="0 0 16.4 16.4"><circle cx="8.2" cy="8.2" r="8.1" fill="#b46e80"/><text x="8.2" y="12.6" text-anchor="middle" font-family="Liberation Sans,sans-serif" font-size="12" fill="#47272f">f</text></svg>
<span class="t" style="left:51px;top:3.2px;letter-spacing:-0.385px;transform:scale(1,1.03);">Final(self, parameters)</span>
</div>
<div class="row" style="top:514.8px"><svg style="left:29px;top:3.3px" width="16.6" height="16.6" viewBox="0 0 16.4 16.4"><circle cx="8.2" cy="8.2" r="8.1" fill="#b46e80"/><text x="8.2" y="12.6" text-anchor="middle" font-family="Liberation Sans,sans-serif" font-size="12" fill="#47272f">f</text></svg>
<span class="t" style="left:51px;top:3.2px;letter-spacing:-0.337px;transform:scale(1,1.03);">Union(self, parameters)</span>
</div>
<div class="row" style="top:538.2px"><svg style="left:29px;top:3.3px" width="16.6" height="16.6" viewBox="0 0 16.4 16.4"><circle cx="8.2" cy="8.2" r="8.1" fill="#b46e80"/><text x="8.2" y="12.6" text-anchor="middle" font-family="Liberation Sans,sans-serif" font-size="12" fill="#47272f">f</text></svg>
<span class="t" style="left:51px;top:3.2px;letter-spacing:-0.192px;transform:scale(1,1.03);">Optional(self, parameters)</span>
</div>
<div class="row" style="top:561.6px"><svg style="left:29px;top:3.3px" width="16.6" height="16.6" viewBox="0 0 16.4 16.4"><circle cx="8.2" cy="8.2" r="8.1" fill="#b46e80"/><text x="8.2" y="12.6" text-anchor="middle" font-family="Liberation Sans,sans-serif" font-size="12" fill="#47272f">f</text></svg>
<span class="t" style="left:51px;top:3.2px;letter-spacing:-0.289px;transform:scale(1,1.03);">Literal(self, *parameters)</span>
</div>
<div class="row" style="top:585px"><svg style="left:29px;top:3.3px" width="16.6" height="16.6" viewBox="0 0 16.4 16.4"><circle cx="8.2" cy="8.2" r="8.1" fill="#b46e80"/><text x="8.2" y="12.6" text-anchor="middle" font-family="Liberation Sans,sans-serif" font-size="12" fill="#47272f">f</text></svg>
<span class="t" style="left:51px;top:3.2px;letter-spacing:-0.350px;transform:scale(1,1.03);">TypeAlias(self, parameters)</span>
</div>
<div class="row" style="top:608.4px"><svg style="left:29px;top:3.3px" width="16.6" height="16.6" viewBox="0 0 16.4 16.4"><circle cx="8.2" cy="8.2" r="8.1" fill="#b46e80"/><text x="8.2" y="12.6" text-anchor="middle" font-family="Liberation Sans,sans-serif" font-size="12" fill="#47272f">f</text></svg>
<span class="t" style="left:51px;top:3.2px;letter-spacing:-0.350px;transform:scale(1,1.03);">Concatenate(self, parameters)</span>
</div>
<div class="row" style="top:631.8px"><svg style="left:29px;top:3.3px" width="16.6" height="16.6" viewBox="0 0 16.4 16.4"><circle cx="8.2" cy="8.2" r="8.1" fill="#b46e80"/><text x="8.2" y="12.6" text-anchor="middle" font-family="Liberation Sans,sans-serif" font-size="12" fill="#47272f">f</text></svg>
<span class="t" style="left:51px;top:3.2px;letter-spacing:-0.331px;transform:scale(1,1.03);">TypeGuard(self, parameters)</span>
</div>
<div class="row" style="top:655.2px"><svg style="left:10.2px;top:6px" width="6.4" height="10.4" viewBox="0 0 6.4 10.4"><path d="M0.7 0.6 L5.5 5.2 L0.7 9.8" fill="none" stroke="#b4b6b8" stroke-width="1.5"/></svg>
<svg style="left:29px;top:3.3px" width="16.6" height="16.6" viewBox="0 0 16.4 16.4"><circle cx="8.2" cy="8.2" r="8.1" fill="#3a93b8"/><text x="8.2" y="12.4" text-anchor="middle" font-family="Liberation Sans,sans-serif" font-size="12" fill="#173a4d">c</text></svg>
<span class="t" style="left:51px;top:3.2px;letter-spacing:-0.349px;transform:scale(1,1.03);">ForwardRef(<i class="u">_</i>Final, <i class="u">_</i>root=True)</span>
</div>
<div class="row" style="top:678.6px"><svg style="left:10.2px;top:6px" width="6.4" height="10.4" viewBox="0 0 6.4 10.4"><path d="M0.7 0.6 L5.5 5.2 L0.7 9.8" fill="none" stroke="#b4b6b8" stroke-width="1.5"/></svg>
<svg style="left:29px;top:3.3px" width="16.6" height="16.6" viewBox="0 0 16.4 16.4"><circle cx="8.2" cy="8.2" r="8.1" fill="#3a93b8"/><text x="8.2" y="12.4" text-anchor="middle" font-family="Liberation Sans,sans-serif" font-size="12" fill="#173a4d">c</text></svg>
<svg style="left:28px;top:2.1px" width="5.8" height="8.4" viewBox="0 0 5.8 8.4"><path d="M1.4 3.6 V2.5 C1.4 0.3 4.4 0.3 4.4 2.5 V3.6" fill="none" stroke="#f26a1f" stroke-width="1.2"/><rect x="0" y="3.4" width="5.8" height="5" fill="#f26a1f"/></svg>
<span class="t" style="left:51px;top:3.2px;letter-spacing:-0.455px;transform:scale(1,1.03);"><i class="u">_</i>TypeVarLike</span>
</div>
<div class="row" style="top:702px"><svg style="left:10.2px;top:6px" width="6.4" height="10.4" viewBox="0 0 6.4 10.4"><path d="M0.7 0.6 L5.5 5.2 L0.7 9.8" fill="none" stroke="#b4b6b8" stroke-width="1.5"/></svg>
<svg style="left:29px;top:3.3px" width="16.6" height="16.6" viewBox="0 0 16.4 16.4"><circle cx="8.2" cy="8.2" r="8.1" fill="#3a93b8"/><text x="8.2" y="12.4" text-anchor="middle" font-family="Liberation Sans,sans-serif" font-size="12" fill="#173a4d">c</text></svg>
<span class="t" style="left:51px;top:3.2px;letter-spacing:-0.293px;transform:scale(1,1.03);">TypeVar(<i class="u">_</i>Final, <i class="u">_</i>Immutable, <i class="u">_</i>TypeVarLike, <i class="u">_</i>root=True)</span>
</div>
<div class="row" style="top:725.4px"><svg style="left:10.2px;top:6px" width="6.4" height="10.4" viewBox="0 0 6.4 10.4"><path d="M0.7 0.6 L5.5 5.2 L0.7 9.8" fill="none" stroke="#b4b6b8" stroke-width="1.5"/></svg>
<svg style="left:29px;top:3.3px" width="16.6" height="16.6" viewBox="0 0 16.4 16.4"><circle cx="8.2" cy="8.2" r="8.1" fill="#3a93b8"/><text x="8.2" y="12.4" text-anchor="middle" font-family="Liberation Sans,sans-serif" font-size="12" fill="#173a4d">c</text></svg>
<span class="t" style="left:51px;top:3.2px;letter-spacing:-0.329px;transform:scale(1,1.03);">ParamSpecArgs(<i class="u">_</i>Final, <i class="u">_</i>Immutable, <i class="u">_</i>root=True)</span>
</div>
<div class="row" style="top:748.8px"><svg style="left:10.2px;top:6px" width="6.4" height="10.4" viewBox="0 0 6.4 10.4"><path d="M0.7 0.6 L5.5 5.2 L0.7 9.8" fill="none" stroke="#b4b6b8" stroke-width="1.5"/></svg>
<svg style="left:29px;top:3.3px" width="16.6" height="16.6" viewBox="0 0 16.4 16.4"><circle cx="8.2" cy="8.2" r="8.1" fill="#3a93b8"/><text x="8.2" y="12.4" text-anchor="middle" font-family="Liberation Sans,sans-serif" font-size="12" fill="#173a4d">c</text></svg>
<span class="t" style="left:51px;top:3.2px;letter-spacing:-0.378px;transform:scale(1,1.03);">ParamSpecKwargs(<i class="u">_</i>Final, <i class="u">_</i>Immutable, <i class="u">_</i>root=True)</span>
</div>
<div class="row" style="top:772.2px"><svg style="left:10.2px;top:6px" width="6.4" height="10.4" viewBox="0 0 6.4 10.4"><path d="M0.7 0.6 L5.5 5.2 L0.7 9.8" fill="none" stroke="#b4b6b8" stroke-width="1.5"/></svg>
<svg style="left:29px;top:3.3px" width="16.6" height="16.6" viewBox="0 0 16.4 16.4"><circle cx="8.2" cy="8.2" r="8.1" fill="#3a93b8"/><text x="8.2" y="12.4" text-anchor="middle" font-family="Liberation Sans,sans-serif" font-size="12" fill="#173a4d">c</text></svg>
<span class="t" style="left:51px;top:3.2px;letter-spacing:-0.368px;transform:scale(1,1.03);">ParamSpec(<i class="u">_</i>Final, <i class="u">_</i>Immutable, <i class="u">_</i>TypeVarLike, <i class="u">_</i>root=True)</span>
</div>
<div class="row" style="top:795.6px"><svg style="left:29px;top:3.3px" width="16.6" height="16.6" viewBox="0 0 16.4 16.4"><circle cx="8.2" cy="8.2" r="8.1" fill="#b46e80"/><text x="8.2" y="12.6" text-anchor="middle" font-family="Liberation Sans,sans-serif" font-size="12" fill="#47272f">f</text></svg>
<svg style="left:28px;top:2.1px" width="5.8" height="8.4" viewBox="0 0 5.8 8.4"><path d="M1.4 3.6 V2.5 C1.4 0.3 4.4 0.3 4.4 2.5 V3.6" fill="none" stroke="#f26a1f" stroke-width="1.2"/><rect x="0" y="3.4" width="5.8" height="5" fill="#f26a1f"/></svg>
<span class="t" style="left:51px;top:3.2px;letter-spacing:-0.169px;transform:scale(1,1.03);"><i class="u">_</i>is<i class="u">_</i>dunder(attr)</span>
</div>
<div class="row" style="top:819px"><svg style="left:10.2px;top:6px" width="6.4" height="10.4" viewBox="0 0 6.4 10.4"><path d="M0.7 0.6 L5.5 5.2 L0.7 9.8" fill="none" stroke="#b4b6b8" stroke-width="1.5"/></svg>
<svg style="left:29px;top:3.3px" width="16.6" height="16.6" viewBox="0 0 16.4 16.4"><circle cx="8.2" cy="8.2" r="8.1" fill="#3a93b8"/><text x="8.2" y="12.4" text-anchor="middle" font-family="Liberation Sans,sans-serif" font-size="12" fill="#173a4d">c</text></svg>
<svg style="left:28px;top:2.1px" width="5.8" height="8.4" viewBox="0 0 5.8 8.4"><path d="M1.4 3.6 V2.5 C1.4 0.3 4.4 0.3 4.4 2.5 V3.6" fill="none" stroke="#f26a1f" stroke-width="1.2"/><rect x="0" y="3.4" width="5.8" height="5" fill="#f26a1f"/></svg>
<span class="t" style="left:51px;top:3.2px;letter-spacing:-0.505px;transform:scale(1,1.03);"><i class="u">_</i>BaseGenericAlias(<i class="u">_</i>Final, <i class="u">_</i>root=True)</span>
</div>
<div class="row" style="top:842.4px"><svg style="left:10.2px;top:6px" width="6.4" height="10.4" viewBox="0 0 6.4 10.4"><path d="M0.7 0.6 L5.5 5.2 L0.7 9.8" fill="none" stroke="#b4b6b8" stroke-width="1.5"/></svg>
<svg style="left:29px;top:3.3px" width="16.6" height="16.6" viewBox="0 0 16.4 16.4"><circle cx="8.2" cy="8.2" r="8.1" fill="#3a93b8"/><text x="8.2" y="12.4" text-anchor="middle" font-family="Liberation Sans,sans-serif" font-size="12" fill="#173a4d">c</text></svg>
<svg style="left:28px;top:2.1px" width="5.8" height="8.4" viewBox="0 0 5.8 8.4"><path d="M1.4 3.6 V2.5 C1.4 0.3 4.4 0.3 4.4 2.5 V3.6" fill="none" stroke="#f26a1f" stroke-width="1.2"/><rect x="0" y="3.4" width="5.8" height="5" fill="#f26a1f"/></svg>
<span class="t" style="left:51px;top:3.2px;letter-spacing:-0.499px;transform:scale(1,1.03);"><i class="u">_</i>GenericAlias(<i class="u">_</i>BaseGenericAlias, <i class="u">_</i>root=True)</span>
</div>
<div class="row" style="top:865.8px"><svg style="left:10.2px;top:6px" width="6.4" height="10.4" viewBox="0 0 6.4 10.4"><path d="M0.7 0.6 L5.5 5.2 L0.7 9.8" fill="none" stroke="#b4b6b8" stroke-width="1.5"/></svg>
<svg style="left:29px;top:3.3px" width="16.6" height="16.6" viewBox="0 0 16.4 16.4"><circle cx="8.2" cy="8.2" r="8.1" fill="#3a93b8"/><text x="8.2" y="12.4" text-anchor="middle" font-family="Liberation Sans,sans-serif" font-size="12" fill="#173a4d">c</text></svg>
<svg style="left:28px;top:2.1px" width="5.8" height="8.4" viewBox="0 0 5.8 8.4"><path d="M1.4 3.6 V2.5 C1.4 0.3 4.4 0.3 4.4 2.5 V3.6" fill="none" stroke="#f26a1f" stroke-width="1.2"/><rect x="0" y="3.4" width="5.8" height="5" fill="#f26a1f"/></svg>
<span class="t" style="left:51px;top:3.2px;letter-spacing:-0.485px;transform:scale(1,1.03);"><i class="u">_</i>SpecialGenericAlias(<i class="u">_</i>BaseGenericAlias, <i class="u">_</i>root=True)</span>
</div>
<div class="abs" style="left:1px;top:875.4px;width:46px;height:8.6px;background:rgba(128,128,128,.45)"></div>
</div>
<div class="vl" style="left:490px;top:68px;height:952px;background:#323232"></div>
<div class="abs" style="left:491px;top:68px;width:126px;height:28px;background:#4e4a42"></div>
<div class="abs" style="left:491px;top:96px;width:126px;height:3.6px;background:#4a88c7"></div>
<svg style="left:504px;top:74.6px" width="13" height="17" viewBox="0 0 13 17"><path d="M0.7 16.8 V4.4 L5 0 V4.4 H0.7 Z M6 0 H12 V16.8 H0.7 V5.4 H6 Z" fill="#9a9da0"/><rect x="8.8" y="2.4" width="1.2" height="1.2" fill="#7d95a6"/><rect x="8.8" y="5.2" width="1.2" height="1.2" fill="#7d95a6"/><rect x="2" y="9" width="1.2" height="1.2" fill="#7d95a6"/><rect x="4.4" y="9" width="1.2" height="1.2" fill="#7d95a6"/></svg>
<svg style="left:508px;top:80.8px" width="12.6" height="12.6" viewBox="0 0 12 12"><circle cx="6" cy="6" r="5.6" fill="#3c3f41"/></svg>
<svg style="left:508.6px;top:81.4px" width="11.2" height="11.2" viewBox="0 0 12 12"><path d="M5.4 0 C3 0 3.1 1 3.1 1.6 V3 H5.6 V3.5 H2 C0.6 3.5 0 4.6 0 6 C0 7.4 0.7 8.3 1.9 8.3 H3 V6.6 C3 5.4 3.9 4.7 5 4.7 H7.6 C8.5 4.7 9 4 9 3.2 V1.6 C9 0.6 8 0 7 0 Z" fill="#3f8fd6"/><path d="M6.6 12 C9 12 8.9 11 8.9 10.4 V9 H6.4 V8.5 H10 C11.4 8.5 12 7.4 12 6 C12 4.6 11.3 3.7 10.1 3.7 H9 V5.4 C9 6.6 8.1 7.3 7 7.3 H4.4 C3.5 7.3 3 8 3 8.8 V10.4 C3 11.4 4 12 5 12 Z" fill="#f5c211"/></svg>
<span class="t" style="left:525.7px;top:74.9px;letter-spacing:0.128px;transform:scale(1,1.03);">typing.py</span>
<svg style="left:600px;top:80px" width="8" height="8" viewBox="0 0 8 8"><path d="M0.3 0.3 L7.7 7.7 M7.7 0.3 L0.3 7.7" stroke="#7a7d7f" stroke-width="1.1" fill="none"/></svg>
<svg style="left:1959px;top:77px" width="4" height="14" viewBox="0 0 4 14"><circle cx="1.8" cy="1.8" r="1.6" fill="#afb1b3"/><circle cx="1.8" cy="7" r="1.6" fill="#afb1b3"/><circle cx="1.8" cy="12.2" r="1.6" fill="#afb1b3"/></svg>
<div class="hl" style="left:491px;top:99.5px;width:1484px;background:#323232"></div>
<div class="abs" style="left:491px;top:100.5px;width:402px;height:31px;background:#45494a"></div>
<div class="vl" style="left:893px;top:100.5px;height:31px;background:#323232"></div>
<svg style="left:499px;top:109.4px" width="19" height="14" viewBox="0 0 19 14"><circle cx="5.7" cy="5.7" r="5" fill="none" stroke="#9a9da0" stroke-width="1.3"/><path d="M9.2 9.2 L13.6 13.4" stroke="#9a9da0" stroke-width="1.5"/><path d="M14 5.8 H18.4 L16.2 8.6 Z" fill="#9a9da0"/></svg>
<svg style="left:768.8px;top:110.2px" width="14.4" height="12.8" viewBox="0 0 14.4 12.8"><path d="M0.6 1 H9.4 C12.2 1 13.6 2.8 13.6 4.8 C13.6 6.8 12.2 8.6 9.4 8.6 H4.4" fill="none" stroke="#6c6f71" stroke-width="1.5"/><path d="M2.2 8.6 L6.4 5 V12.2 Z" fill="#6c6f71"/></svg>
<div class="vl" style="left:796px;top:104px;height:24px;background:#525557"></div>
<span class="t" style="left:807.2px;top:106.2px;letter-spacing:-0.450px;transform:scale(0.8984,1);font-size:15.5px;font-weight:bold;color:#6c6f71;">Cc</span>
<span class="t" style="left:839px;top:106.2px;letter-spacing:-0.450px;transform:scale(1.001,1);font-size:15.5px;font-weight:bold;color:#6c6f71;">W</span>
<span class="t" style="left:870.6px;top:106.2px;letter-spacing:0.328px;font-size:15.5px;font-weight:bold;color:#6c6f71;">.*</span>
<span class="t" style="left:922.7px;top:107px;letter-spacing:-0.014px;font-size:12.4px;">0 results</span>
<svg style="left:997.4px;top:109px" width="10.4" height="13.8" viewBox="0 0 10.4 13.8"><path d="M5.2 1 V13.8" stroke="#5a5d5f" stroke-width="1.5" fill="none"/><path d="M0.6 5.8 L5.2 1.2 L9.8 5.8" stroke="#5a5d5f" stroke-width="1.5" fill="none"/></svg>
<svg style="left:1027.4px;top:109px" width="10.4" height="13.8" viewBox="0 0 10.4 13.8"><path d="M5.2 0 V12.8" stroke="#5a5d5f" stroke-width="1.5" fill="none"/><path d="M0.6 8 L5.2 12.6 L9.8 8" stroke="#5a5d5f" stroke-width="1.5" fill="none"/></svg>
<svg style="left:1056px;top:109px" width="14.2" height="14.2" viewBox="0 0 14.2 14.2"><rect x="0.6" y="0.6" width="13" height="13" fill="none" stroke="#5a5d5f" stroke-width="1.2"/><rect x="1" y="9.4" width="7" height="4" fill="#5a5d5f"/></svg>
<div class="vl" style="left:1082px;top:104px;height:23px;background:#525557"></div>
<svg style="left:1093.5px;top:108.4px" width="17.4" height="17" viewBox="0 0 17.4 17"><path d="M0 5 H10.8 M5.4 0 V10.4" stroke="#5a5d5f" stroke-width="1.6" fill="none"/><path d="M11.8 7.4 V16.6 M10.2 7.4 H13.4 M10.2 16.6 H13.4" stroke="#5a5d5f" stroke-width="0.9" fill="none"/><path d="M15.6 7.4 V16.6 M14 7.4 H17.2 M14 16.6 H17.2" stroke="#5a5d5f" stroke-width="0.9" fill="none"/></svg>
<svg style="left:1123.5px;top:108.4px" width="18" height="17" viewBox="0 0 18 17"><path d="M0 4.6 H11.4" stroke="#5a5d5f" stroke-width="1.6" fill="none"/><path d="M12.4 7.4 V16.6 M10.8 7.4 H14 M10.8 16.6 H14" stroke="#5a5d5f" stroke-width="0.9" fill="none"/><path d="M16.2 7.4 V16.6 M14.6 7.4 H17.8 M14.6 16.6 H17.8" stroke="#5a5d5f" stroke-width="0.9" fill="none"/></svg>
<svg style="left:1152.8px;top:108.4px" width="18.8" height="17" viewBox="0 0 18.8 17"><rect x="0.6" y="0.8" width="9" height="8.6" fill="none" stroke="#5a5d5f" stroke-width="1.1"/><path d="M2.6 4.6 L4.8 7 L10.4 0.6" stroke="#5a5d5f" stroke-width="1.3" fill="none"/><path d="M13.2 7.4 V16.6 M11.6 7.4 H14.8 M11.6 16.6 H14.8" stroke="#5a5d5f" stroke-width="0.9" fill="none"/><path d="M17 7.4 V16.6 M15.4 7.4 H18.6 M15.4 16.6 H18.6" stroke="#5a5d5f" stroke-width="0.9" fill="none"/></svg>
<div class="vl" style="left:1182px;top:104px;height:23px;background:#525557"></div>
<svg style="left:1194px;top:110.4px" width="15.8" height="14" viewBox="0 0 15.8 14"><path d="M0 1 H12.6 M0 5.6 H7.6 M0 10.2 H7.6" stroke="#afb1b3" stroke-width="1.7" fill="none"/><path d="M12.6 5 V12.6 M10.2 4.8 H15 M10.2 12.8 H15" stroke="#afb1b3" stroke-width="1.2" fill="none"/></svg>
<svg style="left:1224.6px;top:109.4px" width="14.6" height="14.4" viewBox="0 0 14.6 14.4"><path d="M0 0 H14.4 L8.8 6.6 V14 H5.6 V6.6 Z" fill="#afb1b3"/></svg>
<svg style="left:1958.6px;top:112px" width="9" height="9" viewBox="0 0 9 9"><path d="M0.3 0.3 L8.7 8.7 M8.7 0.3 L0.3 8.7" stroke="#6e7173" stroke-width="1.1" fill="none"/></svg>
<div class="hl" style="left:491px;top:131.5px;width:1484px;background:#323232"></div>
<div id="ed"><div id="gut"></div>
<div class="vl" style="left:117px;top:0;height:860px;background:#555555"></div>
<div class="vl" style="left:1250px;top:0;height:860px;background:#424242"></div>
<span class="ln" style="top:5.35px">34</span><span class="cl" style="top:5.45px"><i class="cu">_</i><i class="cu">_</i>all<i class="cu">_</i><i class="cu">_</i> = [</span>
<span class="ln" style="top:31.12px">35</span><span class="cl" style="top:31.22px"><span class="c">    # Super-special typing primitives.</span></span>
<span class="ln" style="top:56.9px">36</span><span class="cl" style="top:57px">    <span class="s">'Annotated'</span><span class="k">,</span></span>
<span class="ln" style="top:82.67px">37</span><span class="cl" style="top:82.77px">    <span class="s">'Any'</span><span class="k">,</span></span>
<span class="ln" style="top:108.45px">38</span><span class="cl" style="top:108.55px">    <span class="s">'Callable'</span><span class="k">,</span></span>
<span class="ln" style="top:134.22px">39</span><span class="cl" style="top:134.32px">    <span class="s">'ClassVar'</span><span class="k">,</span></span>
<span class="ln" style="top:160px">40</span><span class="cl" style="top:160.1px">    <span class="s">'Concatenate'</span><span class="k">,</span></span>
<span class="ln" style="top:185.77px">41</span><span class="cl" style="top:185.87px">    <span class="s">'Final'</span><span class="k">,</span></span>
<span class="ln" style="top:211.55px">42</span><span class="cl" style="top:211.65px">    <span class="s">'ForwardRef'</span><span class="k">,</span></span>
<span class="ln" style="top:237.32px">43</span><span class="cl" style="top:237.42px">    <span class="s">'Generic'</span><span class="k">,</span></span>
<span class="ln" style="top:263.1px">44</span><span class="cl" style="top:263.2px">    <span class="s">'Literal'</span><span class="k">,</span></span>
<span class="ln" style="top:288.87px">45</span><span class="cl" style="top:288.97px">    <span class="s">'Optional'</span><span class="k">,</span></span>
<span class="ln" style="top:314.65px">46</span><span class="cl" style="top:314.75px">    <span class="s">'ParamSpec'</span><span class="k">,</span></span>
<span class="ln" style="top:340.42px">47</span><span class="cl" style="top:340.52px">    <span class="s">'Protocol'</span><span class="k">,</span></span>
<span class="ln" style="top:366.2px">48</span><span class="cl" style="top:366.3px">    <span class="s">'Tuple'</span><span class="k">,</span></span>
<span class="ln" style="top:391.97px">49</span><span class="cl" style="top:392.07px">    <span class="s">'Type'</span><span class="k">,</span></span>
<span class="ln" style="top:417.75px">50</span><span class="cl" style="top:417.85px">    <span class="s">'TypeVar'</span><span class="k">,</span></span>
<span class="ln" style="top:443.52px">51</span><span class="cl" style="top:443.62px">    <span class="s">'Union'</span><span class="k">,</span></span>
<span class="ln" style="top:469.3px">52</span>
<span class="ln" style="top:495.07px">53</span><span class="cl" style="top:495.17px"><span class="c">    # ABCs (from collections.abc).</span></span>
<span class="ln" style="top:520.85px">54</span><span class="cl" style="top:520.95px">    <span class="s">'AbstractSet'</span><span class="k">,</span><span class="c">  # collections.abc.Set.</span></span>
<span class="ln" style="top:546.62px">55</span><span class="cl" style="top:546.73px">    <span class="s">'ByteString'</span><span class="k">,</span></span>
<span class="ln" style="top:572.4px">56</span><span class="cl" style="top:572.5px">    <span class="s">'Container'</span><span class="k">,</span></span>
<span class="ln" style="top:598.17px">57</span><span class="cl" style="top:598.27px">    <span class="s">'ContextManager'</span><span class="k">,</span></span>
<span class="ln" style="top:623.95px">58</span><span class="cl" style="top:624.05px">    <span class="s">'Hashable'</span><span class="k">,</span></span>
<span class="ln" style="top:649.73px">59</span><span class="cl" style="top:649.83px">    <span class="s">'ItemsView'</span><span class="k">,</span></span>
<span class="ln" style="top:675.5px">60</span><span class="cl" style="top:675.6px">    <span class="s">'Iterable'</span><span class="k">,</span></span>
<span class="ln" style="top:701.27px">61</span><span class="cl" style="top:701.38px">    <span class="s">'Iterator'</span><span class="k">,</span></span>
<span class="ln" style="top:727.05px">62</span><span class="cl" style="top:727.15px">    <span class="s">'KeysView'</span><span class="k">,</span></span>
<span class="ln" style="top:752.82px">63</span><span class="cl" style="top:752.92px">    <span class="s">'Mapping'</span><span class="k">,</span></span>
<span class="ln" style="top:778.6px">64</span><span class="cl" style="top:778.7px">    <span class="s">'MappingView'</span><span class="k">,</span></span>
<span class="ln" style="top:804.38px">65</span><span class="cl" style="top:804.48px">    <span class="s">'MutableMapping'</span><span class="k">,</span></span>
<span class="ln" style="top:830.15px">66</span><span class="cl" style="top:830.25px">    <span class="s">'MutableSequence'</span><span class="k">,</span></span>
<span class="cl" style="left:89px;top:8.05px;color:#c4c6c8;font-size:16.5px;transform:none">*</span>
<svg style="left:114.4px;top:10px" width="9.4" height="13.4" viewBox="0 0 9.4 13.4"><path d="M0.6 0.6 H8.8 V8.4 L4.7 12.6 L0.6 8.4 Z" fill="#2b2b2b" stroke="#6a6a6a" stroke-width="1"/><path d="M2.6 5 H6.8" stroke="#6a6a6a" stroke-width="1"/></svg>
<span class="t" style="left:1344px;top:7.8px;letter-spacing:-0.247px;transform:scale(1,1.03);">Reader Mode</span>
<div class="vl" style="left:1452px;top:6px;height:21px;background:#5a5d5f"></div>
<svg style="left:1461px;top:10.6px" width="16" height="12" viewBox="0 0 16 12"><path d="M1 6.6 L5.4 10.6 L14.8 1.2 L12.8 0.8 L5.4 8 L2.6 5.4 Z" fill="none" stroke="#499c54" stroke-width="1.2"/></svg>
<div class="abs" style="left:1474px;top:43px;width:9px;height:39px;background:#4d4d4d"></div>
</div>
<div class="abs" style="left:491px;top:992px;width:1484px;height:28px;background:#313335"></div>
<div class="hl" style="left:491px;top:991px;width:1484px;background:#4a4a4a"></div>
<div class="abs" style="left:5px;top:27.5px;width:476px;height:47px;border:3.6px solid #fff;box-sizing:content-box"></div>
<div class="abs" style="left:600.8px;top:127px;width:429.8px;height:867.4px;border-style:solid;border-color:#fff;border-width:4px 3.8px 3.8px 3.6px;box-sizing:content-box"></div>
<svg style="left:480px;top:76px" width="125" height="62" viewBox="0 0 125 62"><path d="M5 4 L113 55.6" stroke="#fff" stroke-width="4.8" fill="none"/><path d="M120.8 58 L110.4 45.8 L107.8 52.6 L105 58 Z" fill="#fff"/></svg>
<div class="abs" style="left:0;top:1020px;width:2000px;height:48px;background:#3c3f41"></div>
<div class="hl" style="left:0;top:1019.5px;width:2000px;background:#323232"></div>
<div class="hl" style="left:0;top:1044.5px;width:2000px;background:#393c3e"></div>
<span class="t" style="left:56px;top:1025.8px;letter-spacing:-0.507px;transform:scale(1,1.03);font-size:13.4px;">Git</span>
<span class="t" style="left:117px;top:1025.8px;letter-spacing:-0.253px;transform:scale(1,1.03);font-size:13.4px;">Debug</span>
<span class="t" style="left:202px;top:1025.8px;letter-spacing:-0.268px;transform:scale(1,1.03);font-size:13.4px;">Python Packages</span>
<span class="t" style="left:350px;top:1025.8px;letter-spacing:-0.450px;transform:scale(0.9661,1.03);font-size:13.4px;">TODO</span>
<span class="t" style="left:431.6px;top:1025.8px;letter-spacing:-0.139px;transform:scale(1,1.03);font-size:13.4px;">Python Console</span>
<span class="t" style="left:571.6px;top:1025.8px;letter-spacing:-0.320px;transform:scale(1,1.03);font-size:13.4px;">Problems</span>
<span class="t" style="left:670.4px;top:1025.8px;letter-spacing:-0.027px;transform:scale(1,1.03);font-size:13.4px;">Terminal</span>
<span class="t" style="left:766.6px;top:1025.8px;letter-spacing:-0.719px;transform:scale(1,1.03);font-size:13.4px;">Services</span>
<span class="t" style="left:860px;top:1025.8px;letter-spacing:-0.341px;transform:scale(1,1.03);font-size:13.4px;">Database Changes</span>
<span class="t" style="left:1019.4px;top:1025.8px;letter-spacing:-0.196px;transform:scale(1,1.03);font-size:13.4px;">Endpoints</span>
<svg style="left:37px;top:1027px" width="11" height="13.4" viewBox="0 0 11 13.4"><circle cx="2.4" cy="2.2" r="2" fill="#afb1b3"/><circle cx="2.4" cy="11.2" r="2" fill="#afb1b3"/><circle cx="8.8" cy="3.6" r="2" fill="#afb1b3"/><path d="M2.4 2 V11 M8.8 4 C8.8 7.6 2.4 6.6 2.4 10" fill="none" stroke="#afb1b3" stroke-width="1.5"/></svg>
<svg style="left:97.6px;top:1027px" width="13" height="14" viewBox="0 0 13 14"><path d="M3.6 0.4 L5 2.4 M8.6 0.4 L7.2 2.4" stroke="#afb1b3" stroke-width="1.2" fill="none"/><path d="M0.2 5 H2.2 M0 7.8 H2.2 M0.4 10.8 H2.4 M12 5 H10 M12.2 7.8 H10 M11.8 10.8 H9.8" stroke="#afb1b3" stroke-width="1.3" fill="none"/><path d="M6.1 1.6 C8 1.6 8.8 2.6 9 3.8 H3.2 C3.4 2.6 4.2 1.6 6.1 1.6 Z M2.2 4.6 H10 V9 C10 12 8.2 13.4 6.1 13.4 C4 13.4 2.2 12 2.2 9 Z" fill="#afb1b3"/></svg>
<svg style="left:106.8px;top:1036.8px" width="4.6" height="4.6" viewBox="0 0 4.6 4.6"><circle cx="2.3" cy="2.3" r="2.2" fill="#1fd23c"/></svg>
<svg style="left:182px;top:1026.4px" width="14.4" height="14.2" viewBox="0 0 14.4 14.2"><path d="M7.2 0 L14.4 3.6 L7.2 7.2 L0 3.6 Z" fill="#afb1b3"/><path d="M0.6 6.6 L7.2 9.9 L13.8 6.6 M0.6 9.8 L7.2 13.2 L13.8 9.8" fill="none" stroke="#afb1b3" stroke-width="1.5"/></svg>
<svg style="left:331px;top:1028px" width="12.4" height="10.6" viewBox="0 0 12.4 10.6"><rect x="0" y="0" width="2.2" height="2.2" fill="#afb1b3"/><rect x="3.6" y="0" width="8.6" height="2.2" fill="#afb1b3"/><rect x="0" y="4.1" width="2.2" height="2.2" fill="#afb1b3"/><rect x="3.6" y="4.1" width="8.6" height="2.2" fill="#afb1b3"/><rect x="0" y="8.2" width="2.2" height="2.2" fill="#afb1b3"/><rect x="3.6" y="8.2" width="8.6" height="2.2" fill="#afb1b3"/></svg>
<svg style="left:412.4px;top:1027px" width="13.2" height="13.2" viewBox="0 0 12 12"><path d="M5.4 0 C3 0 3.1 1 3.1 1.6 V3 H5.6 V3.5 H2 C0.6 3.5 0 4.6 0 6 C0 7.4 0.7 8.3 1.9 8.3 H3 V6.6 C3 5.4 3.9 4.7 5 4.7 H7.6 C8.5 4.7 9 4 9 3.2 V1.6 C9 0.6 8 0 7 0 Z" fill="#afb1b3"/><path d="M6.6 12 C9 12 8.9 11 8.9 10.4 V9 H6.4 V8.5 H10 C11.4 8.5 12 7.4 12 6 C12 4.6 11.3 3.7 10.1 3.7 H9 V5.4 C9 6.6 8.1 7.3 7 7.3 H4.4 C3.5 7.3 3 8 3 8.8 V10.4 C3 11.4 4 12 5 12 Z" fill="#afb1b3"/></svg>
<svg style="left:552.4px;top:1027px" width="12" height="12" viewBox="0 0 12 12"><circle cx="6" cy="6" r="5.9" fill="#afb1b3"/><rect x="5.1" y="2.4" width="1.8" height="4.8" fill="#3c3f41"/><rect x="5.1" y="8.2" width="1.8" height="1.8" fill="#3c3f41"/></svg>
<svg style="left:651.6px;top:1027px" width="13" height="11.6" viewBox="0 0 13 11.6"><rect x="0" y="0" width="13" height="11.6" fill="#afb1b3"/><path d="M2 2.6 L5 5.4 L2 8.2" fill="none" stroke="#3c3f41" stroke-width="1.3"/><path d="M6 8.8 H10.4" stroke="#3c3f41" stroke-width="1.3"/></svg>
<svg style="left:746px;top:1027px" width="15.2" height="13.2" viewBox="0 0 15.2 13.2"><path d="M3.8 0 H11.4 L15.2 6.6 L11.4 13.2 H3.8 L0 6.6 Z" fill="#afb1b3"/><path d="M5.6 3.2 L10.6 6.6 L5.6 10 Z" fill="#3c3f41"/></svg>
<svg style="left:840px;top:1026.4px" width="14.4" height="14.2" viewBox="0 0 14.4 14.2"><ellipse cx="6.4" cy="2.4" rx="6.2" ry="2.4" fill="#afb1b3"/><path d="M0.2 4.2 C1 6 11.8 6 12.6 4.2 V6.4 C11.8 8.2 1 8.2 0.2 6.4 Z" fill="#afb1b3"/><path d="M0.2 7.6 C0.8 9 5 9.4 6.4 9.2 V11.4 C4 11.6 0.8 11 0.2 9.8 Z" fill="#afb1b3"/><path d="M0.2 11 C0.8 12.2 3.6 12.8 5.4 12.8 V14 C3.4 14 0.8 13.6 0.2 12.4 Z" fill="#afb1b3"/><path d="M7.2 10.6 L9.4 12.8 L13.8 8.2" fill="none" stroke="#afb1b3" stroke-width="1.5"/></svg>
<svg style="left:998px;top:1026px" width="15.6" height="15" viewBox="0 0 15.6 15"><circle cx="7.8" cy="2.8" r="2.6" fill="#afb1b3"/><circle cx="2.6" cy="12" r="2.6" fill="#afb1b3"/><circle cx="13" cy="12" r="2.6" fill="#afb1b3"/><path d="M7.8 2.8 L2.6 12 M7.8 2.8 L13 12" stroke="#afb1b3" stroke-width="1.4"/></svg>
<svg style="left:14px;top:1051px" width="14" height="14" viewBox="0 0 14 14"><rect x="3.4" y="0.6" width="10" height="10" fill="none" stroke="#9a9da0" stroke-width="1.2"/><path d="M0.6 3.4 V13.4 H10.6" fill="none" stroke="#9a9da0" stroke-width="1.2"/></svg>
<span class="t" style="left:1221.9px;top:1047.8px;letter-spacing:-0.251px;transform:scale(1,1.03);font-size:15.5px;">&lt;no default server&gt;</span>
<span class="t" style="left:1366.7px;top:1047.8px;letter-spacing:-0.739px;transform:scale(1,1.03);font-size:15.5px;">98:17</span>
<span class="t" style="left:1451.3px;top:1047.8px;letter-spacing:-0.450px;transform:scale(0.8401,1.03);font-size:15.5px;">CRLF</span>
<span class="t" style="left:1499.8px;top:1047.8px;letter-spacing:-0.450px;transform:scale(0.9503,1.03);font-size:15.5px;">UTF-8</span>
<span class="t" style="left:1554px;top:1047.8px;letter-spacing:-0.450px;transform:scale(0.9683,1.03);font-size:15.5px;">4 spaces</span>
<span class="t" style="left:1626px;top:1047.8px;letter-spacing:-0.188px;transform:scale(1,1.03);font-size:15.5px;">Poetry (dify-0.7.2) [Python 3.10.3]</span>
<span class="t" style="left:1886px;top:1047.8px;letter-spacing:-0.696px;transform:scale(1,1.03);font-size:15.5px;">master</span>
<svg style="left:1418.8px;top:1050.6px" width="17.6" height="14.9" viewBox="0 0 17.6 14.9"><path d="M2.8 5.8 C0.4 6.8 -0.2 9 0.4 10.6 C1.4 13.4 5 14.6 8.8 14.6 C12.6 14.6 16.2 13.4 17.2 10.6 C17.8 9 17.2 6.8 14.8 5.8 L13.6 7 H4 Z" fill="#b6b8ba"/><path d="M2.9 7.2 H14.7 V11.4 C13 12.9 4.6 12.9 2.9 11.4 Z" fill="#3c3f41"/><rect x="6" y="8.6" width="1.3" height="2.8" rx="0.6" fill="#b6b8ba"/><rect x="9.8" y="8.6" width="1.3" height="2.8" rx="0.6" fill="#b6b8ba"/><circle cx="5.8" cy="3.9" r="3.2" fill="#3c3f41" stroke="#b6b8ba" stroke-width="1.3"/><circle cx="11.9" cy="3.9" r="3.2" fill="#3c3f41" stroke="#b6b8ba" stroke-width="1.3"/></svg>
<svg style="left:1866.6px;top:1050.4px" width="12" height="16.4" viewBox="0 0 12 16.4"><circle cx="3" cy="2.4" r="2.2" fill="#afb1b3"/><circle cx="3.6" cy="13.8" r="2.3" fill="#afb1b3"/><circle cx="9.4" cy="4.4" r="2.2" fill="#afb1b3"/><path d="M3.2 2.4 V13 M9.4 4.8 C9.4 9 3.4 8.4 3.4 12.4" fill="none" stroke="#afb1b3" stroke-width="1.7"/></svg>
<svg style="left:1947.2px;top:1052px" width="9" height="11.4" viewBox="0 0 9 11.4"><rect x="0" y="4.4" width="8.8" height="7" fill="#afb1b3"/></svg>
<svg style="left:1972px;top:1051px" width="15" height="15" viewBox="0 0 15 15"><circle cx="7.5" cy="7.5" r="7.2" fill="#55585a"/><circle cx="7.5" cy="9" r="1.6" fill="#3c3f41"/></svg>
<div class="abs" style="left:1844px;top:1001.5px;width:146px;height:56.5px;background:#fff"></div>
<div class="hl" style="left:1844px;top:1033px;width:146px;background:#7fd6f2"></div>
<span class="t" style="left:1842.7px;top:999.4px;width:40px;height:34px;line-height:34px;font-size:29px;color:#0f65b5;text-align:center;font-family:'Noto Sans CJK SC',sans-serif;font-weight:400;transform:scaleX(1.3);transform-origin:50% 50%">开</span>
<span class="t" style="left:1897px;top:999.4px;width:40px;height:34px;line-height:34px;font-size:29px;color:#0f65b5;text-align:center;font-family:'Noto Sans CJK SC',sans-serif;font-weight:400;transform:scaleX(1.3);transform-origin:50% 50%">发</span>
<span class="t" style="left:1951px;top:999.4px;width:40px;height:34px;line-height:34px;font-size:29px;color:#0f65b5;text-align:center;font-family:'Noto Sans CJK SC',sans-serif;font-weight:400;transform:scaleX(1.3);transform-origin:50% 50%">者</span>
<span class="t" style="left:1843.8px;top:1030.6px;letter-spacing:-0.450px;transform:scale(0.9386,1);font-size:30px;line-height:30px;height:30px;color:#0f65b5;-webkit-text-stroke:0.2px #fff;">DevZe.CoM</span>

</body></html>
